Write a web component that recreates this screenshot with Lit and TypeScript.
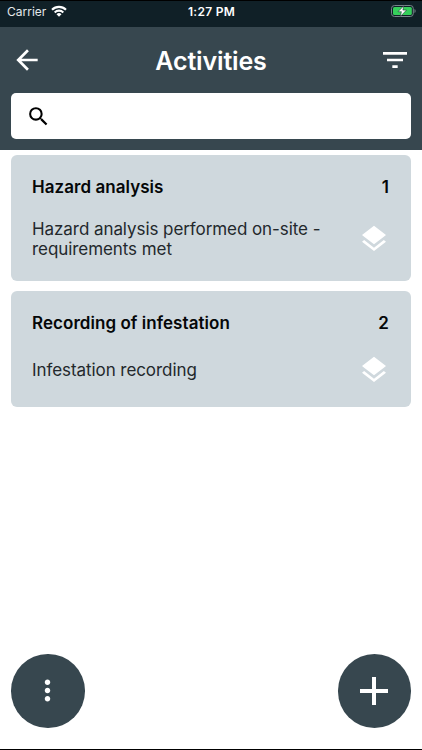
import { LitElement, html, css, svg } from "lit";
import { customElement, property } from "lit/decorators.js";

const glyphs = {
  back: svg`<path d="M20 11H7.83l5.59-5.59L12 4l-8 8 8 8 1.41-1.41L7.83 13H20v-2z"/>`,
  filter: svg`<path d="M10 18h4v-2h-4v2zM3 6v2h18V6H3zm3 7h12v-2H6v2z"/>`,
  search: svg`<path d="M15.5 14h-.79l-.28-.27A6.471 6.471 0 0 0 16 9.5 6.5 6.5 0 1 0 9.5 16c1.61 0 3.09-.59 4.23-1.57l.27.28v.79l5 4.99L20.49 19l-4.99-5zm-6 0C7.01 14 5 11.99 5 9.5S7.01 5 9.5 5 14 7.01 14 9.5 11.99 14 9.5 14z"/>`,
  layers: svg`<path d="M11.99 18.54l-7.37-5.73L3 14.07l9 7 9-7-1.63-1.27-7.38 5.74zM12 16l7.36-5.73L21 9l-9-7-9 7 1.63 1.27L12 16z"/>`,
  more: svg`<path d="M12 8c1.1 0 2-.9 2-2s-.9-2-2-2-2 .9-2 2 .9 2 2 2zm0 2c-1.1 0-2 .9-2 2s.9 2 2 2 2-.9 2-2-.9-2-2-2zm0 6c-1.1 0-2 .9-2 2s.9 2 2 2 2-.9 2-2-.9-2-2-2z"/>`,
  add: svg`<path d="M19 13h-6v6h-2v-6H5v-2h6V5h2v6h6v2z"/>`,
};

const icon = (name: keyof typeof glyphs, size: number) =>
  html`<svg width=${size} height=${size} viewBox="0 0 24 24" fill="currentColor">${glyphs[name]}</svg>`;

@customElement("status-bar")
class StatusBar extends LitElement {
  static styles = css`
    :host {
      display: grid;
      grid-template-columns: 1fr auto 1fr;
      align-items: center;
      box-sizing: border-box;
      height: 27px;
      padding: 0 6px 5px 7px;
      border-top: 1px solid #000;
      background: #102027;
      color: #fff;
      font-size: 12px;
      line-height: 20px;
    }
    svg { display: block; }
    .carrier { display: flex; align-items: center; gap: 5px; color: #e4e8ea; }
    .carrier svg { margin-top: -2px; }
    .time { font-weight: 600; font-size: 12px; letter-spacing: 0.3px; }
    .battery { justify-self: end; margin-top: -2px; }
  `;
  render() {
    return html`
      <div class="carrier">
        <span>Carrier</span>
        <svg width="16" height="12" viewBox="0 0 16 12" fill="none" stroke="#fff" stroke-width="2.1">
          <path d="M1 4.7a10 10 0 0 1 14 0"/>
          <path d="M3.7 7.4a6.1 6.1 0 0 1 8.6 0"/>
          <path d="M8 11.7L5.5 9.2a3.6 3.6 0 0 1 5 0z" fill="#fff" stroke="none"/>
        </svg>
      </div>
      <span class="time">1:27 PM</span>
      <svg class="battery" width="25" height="12" viewBox="0 0 25 12">
        <rect x=".5" y=".5" width="21.8" height="11" rx="3" fill="none" stroke="#77848a"/>
        <rect x="2" y="2" width="18.8" height="8" rx="1.5" fill="#35cf5b"/>
        <path d="M23.5 4v4c1.5-.6 1.5-3.4 0-4z" fill="#77848a"/>
        <path d="M12.8 .8L7 6.7h3.4l-1 4.7 6.1-6.3h-3.6z" fill="#fff" stroke="#102027" stroke-width=".5"/>
      </svg>
    `;
  }
}

@customElement("activity-card")
class ActivityCard extends LitElement {
  @property() heading = "";
  @property() detail = "";
  @property({ type: Number }) count = 0;

  static styles = css`
    :host {
      display: block;
      box-sizing: border-box;
      padding: 20.5px 21px 21px;
      border-radius: 6px;
      background: #cfd8dd;
      font-size: 17px;
    }
    svg { display: block; }
    .top { display: flex; justify-content: space-between; line-height: 22px; font-weight: 600; color: #050708; letter-spacing: 0.05px; }
    .count { margin-right: 1px; }
    .row { display: flex; justify-content: space-between; align-items: center; min-height: 31.5px; margin-top: 21px; }
    .detail { width: 300px; line-height: 20.5px; color: #23282c; letter-spacing: -0.07px; }
    .symbol { color: #fff; margin-block: -1px; }
  `;
  render() {
    return html`
      <div class="top"><span>${this.heading}</span><span class="count">${this.count}</span></div>
      <div class="row">
        <div class="detail">${this.detail}</div>
        <div class="symbol">${icon("layers", 32)}</div>
      </div>
    `;
  }
}

@customElement("app-root")
class AppRoot extends LitElement {
  static styles = css`
    :host {
      display: flex;
      flex-direction: column;
      box-sizing: border-box;
      height: 750px;
      border-bottom: 1px solid #000;
      background: #fff;
      font-family: Inter, "Liberation Sans", sans-serif;
    }
    svg { display: block; }
    header { box-sizing: border-box; height: 123px; padding: 0 11px; background: #37474f; color: #fff; }
    .bar { display: grid; grid-template-columns: 32px 1fr 32px; align-items: center; height: 66px; }
    h1 { margin: 0; padding-top: 1px; text-align: center; font-size: 25px; line-height: 32px; font-weight: 600; letter-spacing: -0.15px; }
    .search { display: flex; align-items: center; height: 46px; padding-left: 15px; border-radius: 5px; background: #fff; color: #000; box-sizing: border-box; }
    main { flex: 1; display: flex; flex-direction: column; gap: 10.5px; padding: 5px 11px 0; }
    footer { display: flex; justify-content: space-between; padding: 0 11px 21.5px; }
    button { display: grid; place-items: center; width: 73.5px; height: 73.5px; padding: 0; border: 0; border-radius: 50%; background: #37474f; color: #fff; }
  `;
  render() {
    return html`
      <status-bar></status-bar>
      <header>
        <div class="bar">${icon("back", 32)}<h1>Activities</h1>${icon("filter", 32)}</div>
        <div class="search">${icon("search", 25)}</div>
      </header>
      <main>
        <activity-card heading="Hazard analysis" detail="Hazard analysis performed on-site - requirements met" count="1"></activity-card>
        <activity-card heading="Recording of infestation" detail="Infestation recording" count="2"></activity-card>
      </main>
      <footer>
        <button aria-label="More">${icon("more", 33)}</button>
        <button aria-label="Add">${icon("add", 48)}</button>
      </footer>
    `;
  }
}
